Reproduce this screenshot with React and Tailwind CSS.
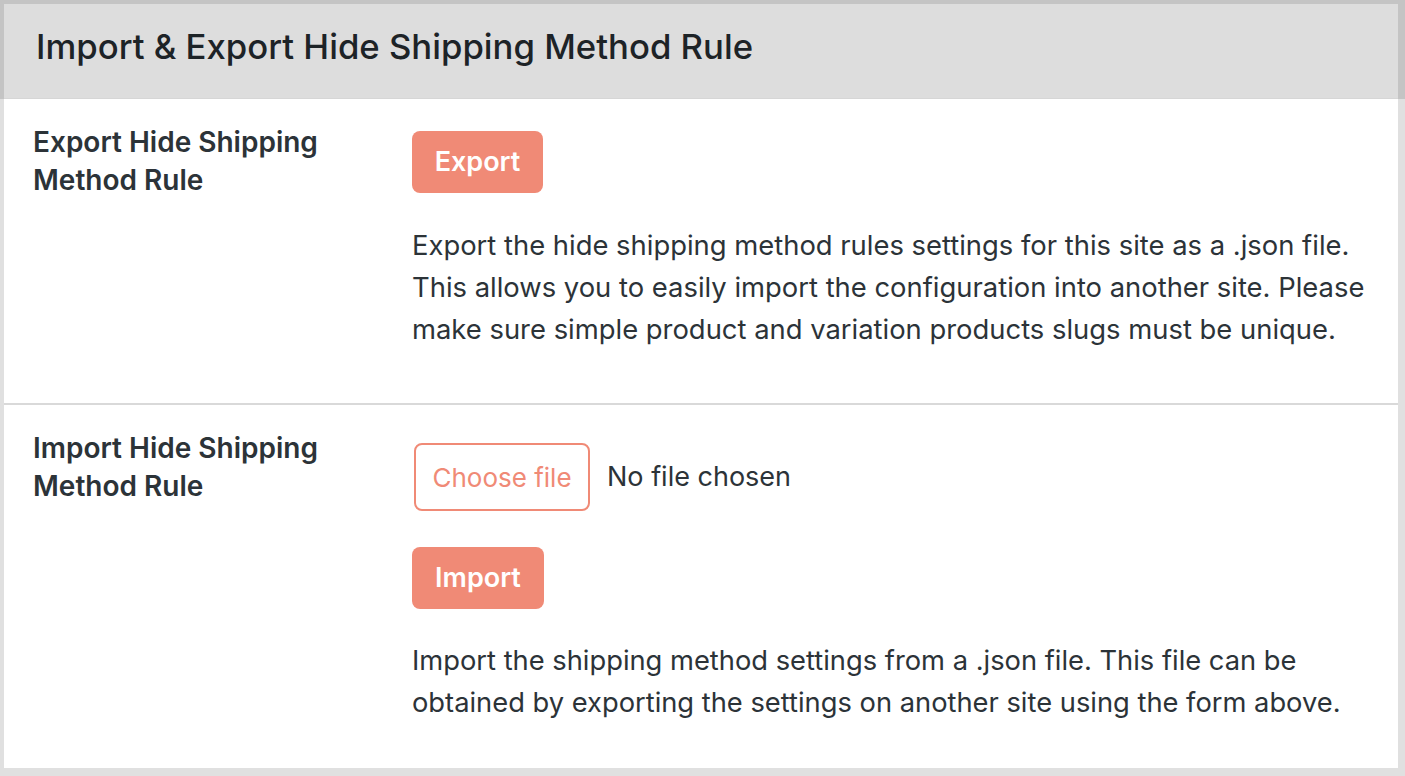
export default function App() {
  return (
    <div className="min-h-[776px] w-full bg-[#e0e0e0] font-['Inter',sans-serif]">
      <div className="bg-[#c4c4c4] pl-[4px] pr-[7px] pt-[4px]">
        <div className="flex h-[95px] items-center border-b border-[#d6d6d6] bg-[#dddddd] pb-[10px] pl-[32px]">
          <h1 className="text-[34.7px] font-medium text-[#1d2327]">
            Import &amp; Export Hide Shipping Method Rule
          </h1>
        </div>
      </div>
      <div className="pb-[8px] pl-[4px] pr-[7px]">
        <div className="bg-white text-[#2c3338]">
          <section className="grid h-[304px] grid-cols-[379px_1fr] pl-[29px] pt-[24px]">
            <h2 className="text-[28px] font-semibold leading-[38px] text-[#2c3338]">
              Export Hide Shipping
              <br />
              Method Rule
            </h2>
            <div className="pt-[8px]">
              <button className="h-[62px] w-[131px] rounded-[8px] bg-[#f08a76] text-[27px] font-semibold text-white">
                Export
              </button>
              <p className="mt-[31px] text-[27.4px] leading-[42px]">
                Export the hide shipping method rules settings for this site as a .json file.
                <br />
                This allows you to easily import the configuration into another site. Please
                <br />
                make sure simple product and variation products slugs must be unique.
              </p>
            </div>
          </section>
          <div className="h-[2px] bg-[#d9d9d9]" />
          <section className="grid h-[363px] grid-cols-[379px_1fr] pl-[29px] pt-[24px]">
            <h2 className="text-[28px] font-semibold leading-[38px] text-[#2c3338]">
              Import Hide Shipping
              <br />
              Method Rule
            </h2>
            <div>
              <div className="flex items-center pt-[14px]">
                <span className="ml-[2px] flex h-[68px] w-[176px] items-center justify-center rounded-[8px] border-2 border-[#f08a76] text-[26px] text-[#f08a76]">
                  Choose file
                </span>
                <span className="ml-[17px] text-[27px]">No file chosen</span>
              </div>
              <button className="mt-[36px] h-[62px] w-[132px] rounded-[8px] bg-[#f08a76] text-[27px] font-semibold text-white">
                Import
              </button>
              <p className="mt-[31px] text-[27.3px] leading-[42px]">
                Import the shipping method settings from a .json file. This file can be
                <br />
                obtained by exporting the settings on another site using the form above.
              </p>
            </div>
          </section>
        </div>
      </div>
    </div>
  );
}
